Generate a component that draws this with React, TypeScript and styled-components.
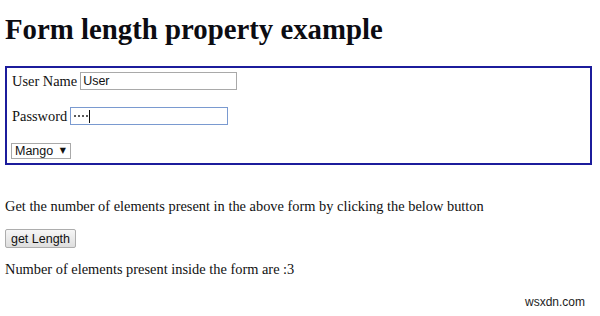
import { FC } from 'react';
import styled, { createGlobalStyle } from 'styled-components';

const GlobalStyle = createGlobalStyle`
  html, body {
    margin: 0;
    padding: 0;
    background: #fff;
  }
  body {
    font-family: "Liberation Serif", "Times New Roman", serif;
    font-size: 14.4px;
    color: #111;
  }
`;

const Page = styled.div`
  padding: 13px 5px 0 5px;
`;

const Title = styled.h1`
  margin: 0 0 20px 0;
  font-size: 28.8px;
  line-height: 33px;
  font-weight: bold;
  color: #0c0c12;
`;

const FormBox = styled.form`
  width: 587px;
  box-sizing: border-box;
  border: 2px solid #1c1c9c;
  padding: 4px 5px 3px 5px;
  display: flex;
  flex-direction: column;
  gap: 17px;
`;

const Row = styled.label`
  display: flex;
  align-items: center;
  height: 18px;
  gap: 3px;
`;

const TextInput = styled.input<{ $w: number; $focused?: boolean }>`
  box-sizing: border-box;
  width: ${(p) => p.$w}px;
  height: 18px;
  margin: 0;
  padding: 0 2px;
  border: 1px solid ${(p) => (p.$focused ? '#7a9ad0' : '#a9a9a9')};
  outline: none;
  font-family: "Liberation Sans", Arial, sans-serif;
  font-size: 12.5px;
  color: #111;
  background: #fff;
`;

const Dots = styled.span`
  display: inline-flex;
  align-items: center;
  gap: 2px;
  padding-left: 2px;
`;

const Dot = styled.i`
  width: 2px;
  height: 2px;
  background: #222;
  border-radius: 1px;
`;

const Caret = styled.i`
  width: 1px;
  height: 13px;
  margin-left: 1px;
  background: #111;
`;

const PasswordBox = styled.span`
  box-sizing: border-box;
  display: inline-flex;
  align-items: center;
  width: 158px;
  height: 18px;
  padding: 0 1px;
  border: 1px solid #7a9ad0;
  background: #fff;
`;

const SelectWrap = styled.span`
  position: relative;
  display: inline-flex;
  width: 60px;
  height: 16px;
  margin-left: -1px;
`;

const Select = styled.select`
  appearance: none;
  box-sizing: border-box;
  width: 100%;
  height: 100%;
  margin: 0;
  padding: 0 0 0 3px;
  border: 1px solid #a9a9a9;
  border-radius: 0;
  background: #fff;
  font-family: "Liberation Sans", Arial, sans-serif;
  font-size: 12.5px;
  line-height: 14px;
  color: #111;
`;

const Arrow = styled.span`
  position: absolute;
  right: 5px;
  top: 2px;
  font-family: "DejaVu Sans", sans-serif;
  font-size: 8px;
  line-height: 12px;
  color: #111;
  pointer-events: none;
`;

const Text = styled.p<{ $mt: number }>`
  margin: ${(p) => p.$mt}px 0 0 0;
  line-height: 17px;
`;

const Button = styled.button`
  display: block;
  box-sizing: border-box;
  margin: 14px 0 0 0;
  width: 71px;
  height: 19px;
  padding: 0;
  border: 1px solid #adadad;
  border-radius: 2px;
  background: linear-gradient(#f6f6f6, #dedede);
  font-family: "Liberation Sans", Arial, sans-serif;
  font-size: 12.5px;
  color: #111;
`;

const Watermark = styled.div`
  position: absolute;
  right: 15px;
  bottom: 7px;
  font-family: "Liberation Sans", Arial, sans-serif;
  font-size: 12px;
  color: #222;
`;

const App: FC = () => {
  return (
    <>
      <GlobalStyle />
      <Page>
        <Title>Form length property example</Title>
        <FormBox onSubmit={(e) => e.preventDefault()}>
          <Row>
            User Name
            <TextInput $w={157} defaultValue="User" />
          </Row>
          <Row>
            Password
            <PasswordBox>
              <Dots>
                <Dot />
                <Dot />
                <Dot />
                <Dot />
              </Dots>
              <Caret />
            </PasswordBox>
          </Row>
          <Row>
            <SelectWrap>
              <Select defaultValue="Mango">
                <option>Mango</option>
                <option>Apple</option>
                <option>Banana</option>
              </Select>
              <Arrow>▼</Arrow>
            </SelectWrap>
          </Row>
        </FormBox>
        <Text $mt={33}>
          Get the number of elements present in the above form by clicking the below button
        </Text>
        <Button type="button">get Length</Button>
        <Text $mt={13}>Number of elements present inside the form are :3</Text>
      </Page>
      <Watermark>wsxdn.com</Watermark>
    </>
  );
};

export default App;
